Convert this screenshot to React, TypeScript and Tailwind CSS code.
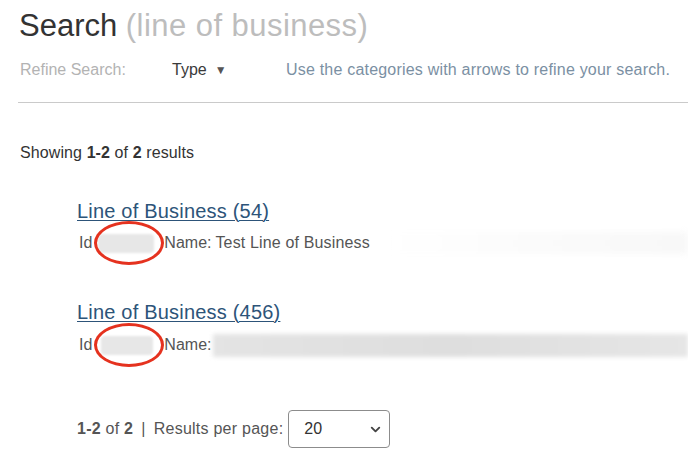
import { ChevronDown } from 'lucide-react';

interface ResultItem {
  id: number;
  title: string;
  name?: string;
}

const results: ResultItem[] = [
  { id: 54, title: 'Line of Business (54)', name: 'Test Line of Business' },
  { id: 456, title: 'Line of Business (456)' },
];

// red marker drawn over the redacted id
function Circle() {
  return (
    <span className="pointer-events-none absolute left-[15px] top-[-22px] h-[44px] w-[70px] rounded-[50%] border-[3px] border-[#e5321f]" />
  );
}

function ResultRow({ item, first }: { item: ResultItem; first: boolean }) {
  return (
    <div className={first ? 'mt-[32px]' : 'mt-[43px]'}>
      <a
        href="#"
        className="ml-[77px] block h-[28px] text-[20px] leading-[28px] tracking-[0.2px] text-[#2d5479] underline decoration-1 underline-offset-2"
      >
        {item.title}
      </a>
      <div className={`relative flex h-[24px] items-center text-[16px] leading-[24px] text-[#555] ${first ? 'mt-[6px]' : 'mt-[7px]'}`}>
        <span className="ml-[79px]">Id</span>
        <span className={`h-[19px] rounded-sm bg-[#e7e7e7] blur-[1px] ${first ? 'ml-[6px] w-[56px]' : 'ml-[9px] w-[52px]'}`} />
        <span className={first ? 'ml-[10px]' : 'ml-[11px]'}>Name:</span>
        {item.name ? (
          <>
            <span className="ml-[4px] tracking-[0.15px]">{item.name}</span>
            <span className="ml-auto h-[22px] w-[300px] bg-gradient-to-r from-white via-[#fbfbfb] to-[#f8f8f8] blur-[3px]" />
          </>
        ) : (
          <span className="ml-[2px] h-[23px] flex-1 bg-gradient-to-r from-[#e4e4e4] via-[#dedede] to-[#e6e6e6] blur-[2px]" />
        )}
        <span className="absolute left-[79px] top-1/2">
          <Circle />
        </span>
      </div>
    </div>
  );
}

export default function App() {
  return (
    <div className="h-[461px] w-[688px] overflow-hidden bg-white font-['Liberation_Sans',Arial,sans-serif]">
      {/* Heading */}
      <h1 className="ml-[19px] mt-[8px] h-[36px] text-[31px] font-normal leading-[36px] text-[#333]">
        Search <span className="tracking-[0.45px] text-[#bdbdbd]">(line of business)</span>
      </h1>

      {/* Refine bar */}
      <div className="mt-[14px] flex h-[24px] items-center text-[16px] leading-[24px]">
        <span className="ml-[20px] w-[152px] text-[#b3b3b3]">Refine Search:</span>
        <span className="flex w-[114px] items-center text-[#3a3a3a]">
          Type
          <span className="ml-[8px] text-[12px] text-[#555]">▼</span>
        </span>
        <span className="tracking-[0.2px] text-[#7b90a3]">Use the categories with arrows to refine your search.</span>
      </div>

      <div className="ml-[18px] mt-[20px] h-px bg-[#cacaca]" />

      {/* Count */}
      <p className="ml-[20px] mt-[38px] h-[24px] text-[16px] leading-[24px] tracking-[0.1px] text-[#333]">
        Showing <b>1-2</b> of <b>2</b> results
      </p>

      {results.map((item, i) => (
        <ResultRow key={item.id} item={item} first={i === 0} />
      ))}

      {/* Pagination */}
      <div className="ml-[77px] mt-[53px] flex h-[38px] items-center text-[16px] text-[#555]">
        <span className="tracking-[0.25px]">
          <b>1-2</b> of <b>2</b>
          <span className="mx-[8px]">|</span>
          Results per page:
        </span>
        <div className="ml-[5px] flex h-[38px] w-[102px] items-center justify-between rounded-[4px] border border-[#8c8c8c] pl-[15px] pr-[6px] text-[#333]">
          <span>20</span>
          <ChevronDown className="h-[15px] w-[15px] text-[#444]" strokeWidth={3} />
        </div>
      </div>
    </div>
  );
}
